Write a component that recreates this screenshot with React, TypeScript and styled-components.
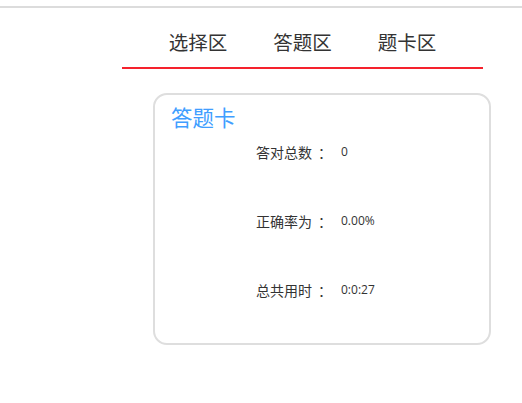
import React from "react";
import styled, { createGlobalStyle } from "styled-components";

const Global = createGlobalStyle`
  html, body { margin: 0; padding: 0; background: #fff; }
  body { font-family: "Noto Sans CJK SC", "Noto Sans", sans-serif; color: #333; }
`;

const TopLine = styled.div`
  height: 6px;
  border-bottom: 2px solid #dcdcdc;
`;

const TabBar = styled.nav`
  margin-left: 122px;
  width: 361px;
  height: 59px;
  border-bottom: 2px solid #f5222d;
  display: flex;
  justify-content: center;
  align-items: center;
  gap: 46px;
`;

const Tab = styled.div`
  font-size: 19.5px;
  line-height: 22px;
  color: #333;
  padding-top: 8px;
  cursor: pointer;
`;

const Card = styled.section`
  margin: 24px 0 0 153px;
  box-sizing: border-box;
  width: 338px;
  height: 252px;
  border: 2px solid #dedede;
  border-radius: 14px;
  padding: 11px 0 0 16px;
`;

const Title = styled.h2`
  margin: 0;
  font-size: 21.5px;
  font-weight: normal;
  line-height: 22px;
  color: #409eff;
`;

const Stats = styled.div`
  margin: 14px 0 0 85px;
  display: flex;
  flex-direction: column;
  gap: 49px;
`;

const Row = styled.div`
  display: flex;
  align-items: center;
  height: 20px;
  font-size: 14px;
  line-height: 20px;
  color: #333;
`;

const Label = styled.span`
  width: 56px;
`;

const Colon = styled.span`
  margin-left: 6px;
  width: 14px;
`;

const Value = styled.span`
  margin-left: 9px;
  font-family: "Open Sans", "Noto Sans", sans-serif;
  font-size: 12px;
`;

const stats = [
  { label: "答对总数", value: "0" },
  { label: "正确率为", value: "0.00%" },
  { label: "总共用时", value: "0:0:27" },
];

export default function App() {
  return (
    <>
      <Global />
      <TopLine />
      <TabBar>
        <Tab>选择区</Tab>
        <Tab>答题区</Tab>
        <Tab>题卡区</Tab>
      </TabBar>
      <Card>
        <Title>答题卡</Title>
        <Stats>
          {stats.map((s) => (
            <Row key={s.label}>
              <Label>{s.label}</Label>
              <Colon>：</Colon>
              <Value>{s.value}</Value>
            </Row>
          ))}
        </Stats>
      </Card>
    </>
  );
}
